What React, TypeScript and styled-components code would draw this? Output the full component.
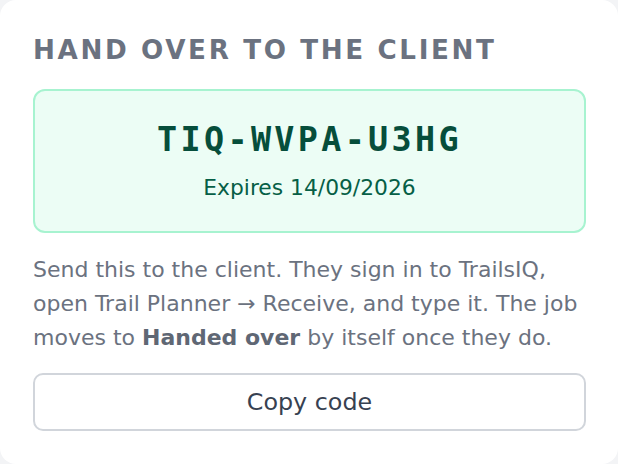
import styled, { createGlobalStyle } from 'styled-components';

const GlobalStyle = createGlobalStyle`
  html, body {
    margin: 0;
    padding: 0;
    background-color: #f3f4f6;
  }

  body {
    font-family: "DejaVu Sans", "Noto Sans", sans-serif;
  }
`;

const Card = styled.section`
  box-sizing: border-box;
  width: 618px;
  height: 464px;
  padding: 35px 32px 32px 33px;
  background-color: #ffffff;
  border-radius: 16px;
  display: flex;
  flex-direction: column;
`;

const Title = styled.h2`
  margin: 0;
  color: #6b7280;
  font-size: 26.2px;
  font-weight: 700;
  line-height: 31px;
  letter-spacing: 0.1em;
  text-transform: uppercase;
`;

const CodeBox = styled.div`
  margin-top: 23px;
  padding: 28px 24px 29px;
  background-color: #ecfdf5;
  border: 2px solid #a7f3d0;
  border-radius: 12px;
  display: flex;
  flex-direction: column;
  align-items: center;
  gap: 14px;
`;

const Code = styled.div`
  color: #064e3b;
  font-family: "DejaVu Sans Mono", "Liberation Mono", monospace;
  font-size: 33.4px;
  font-weight: 700;
  line-height: 41px;
  letter-spacing: 0.1em;
`;

const Expiry = styled.div`
  color: #065f46;
  font-size: 21.8px;
  line-height: 28px;
`;

const Help = styled.p`
  margin: 20px 0 0;
  color: #6b7280;
  font-size: 22px;
  line-height: 34px;

  strong {
    color: #5f6774;
    font-weight: 700;
  }
`;

const CopyButton = styled.button`
  margin-top: 18px;
  height: 58px;
  width: 100%;
  background-color: #ffffff;
  border: 2px solid #d1d5db;
  border-radius: 10px;
  color: #374151;
  font-family: "DejaVu Sans", "Noto Sans", sans-serif;
  font-size: 23.8px;
  cursor: pointer;

  &:hover {
    background-color: #f9fafb;
  }
`;

const App = () => {
  const code = 'TIQ-WVPA-U3HG';

  const handleCopy = () => {
    navigator.clipboard?.writeText(code).catch(() => {});
  };

  return (
    <>
      <GlobalStyle />
      <Card>
        <Title>Hand over to the client</Title>
        <CodeBox>
          <Code>{code}</Code>
          <Expiry>Expires 14/09/2026</Expiry>
        </CodeBox>
        <Help>
          Send this to the client. They sign in to TrailsIQ, open Trail Planner → Receive, and type it. The job
          moves to <strong>Handed over</strong> by itself once they do.
        </Help>
        <CopyButton type='button' onClick={handleCopy}>Copy code</CopyButton>
      </Card>
    </>
  );
};

export default App;
